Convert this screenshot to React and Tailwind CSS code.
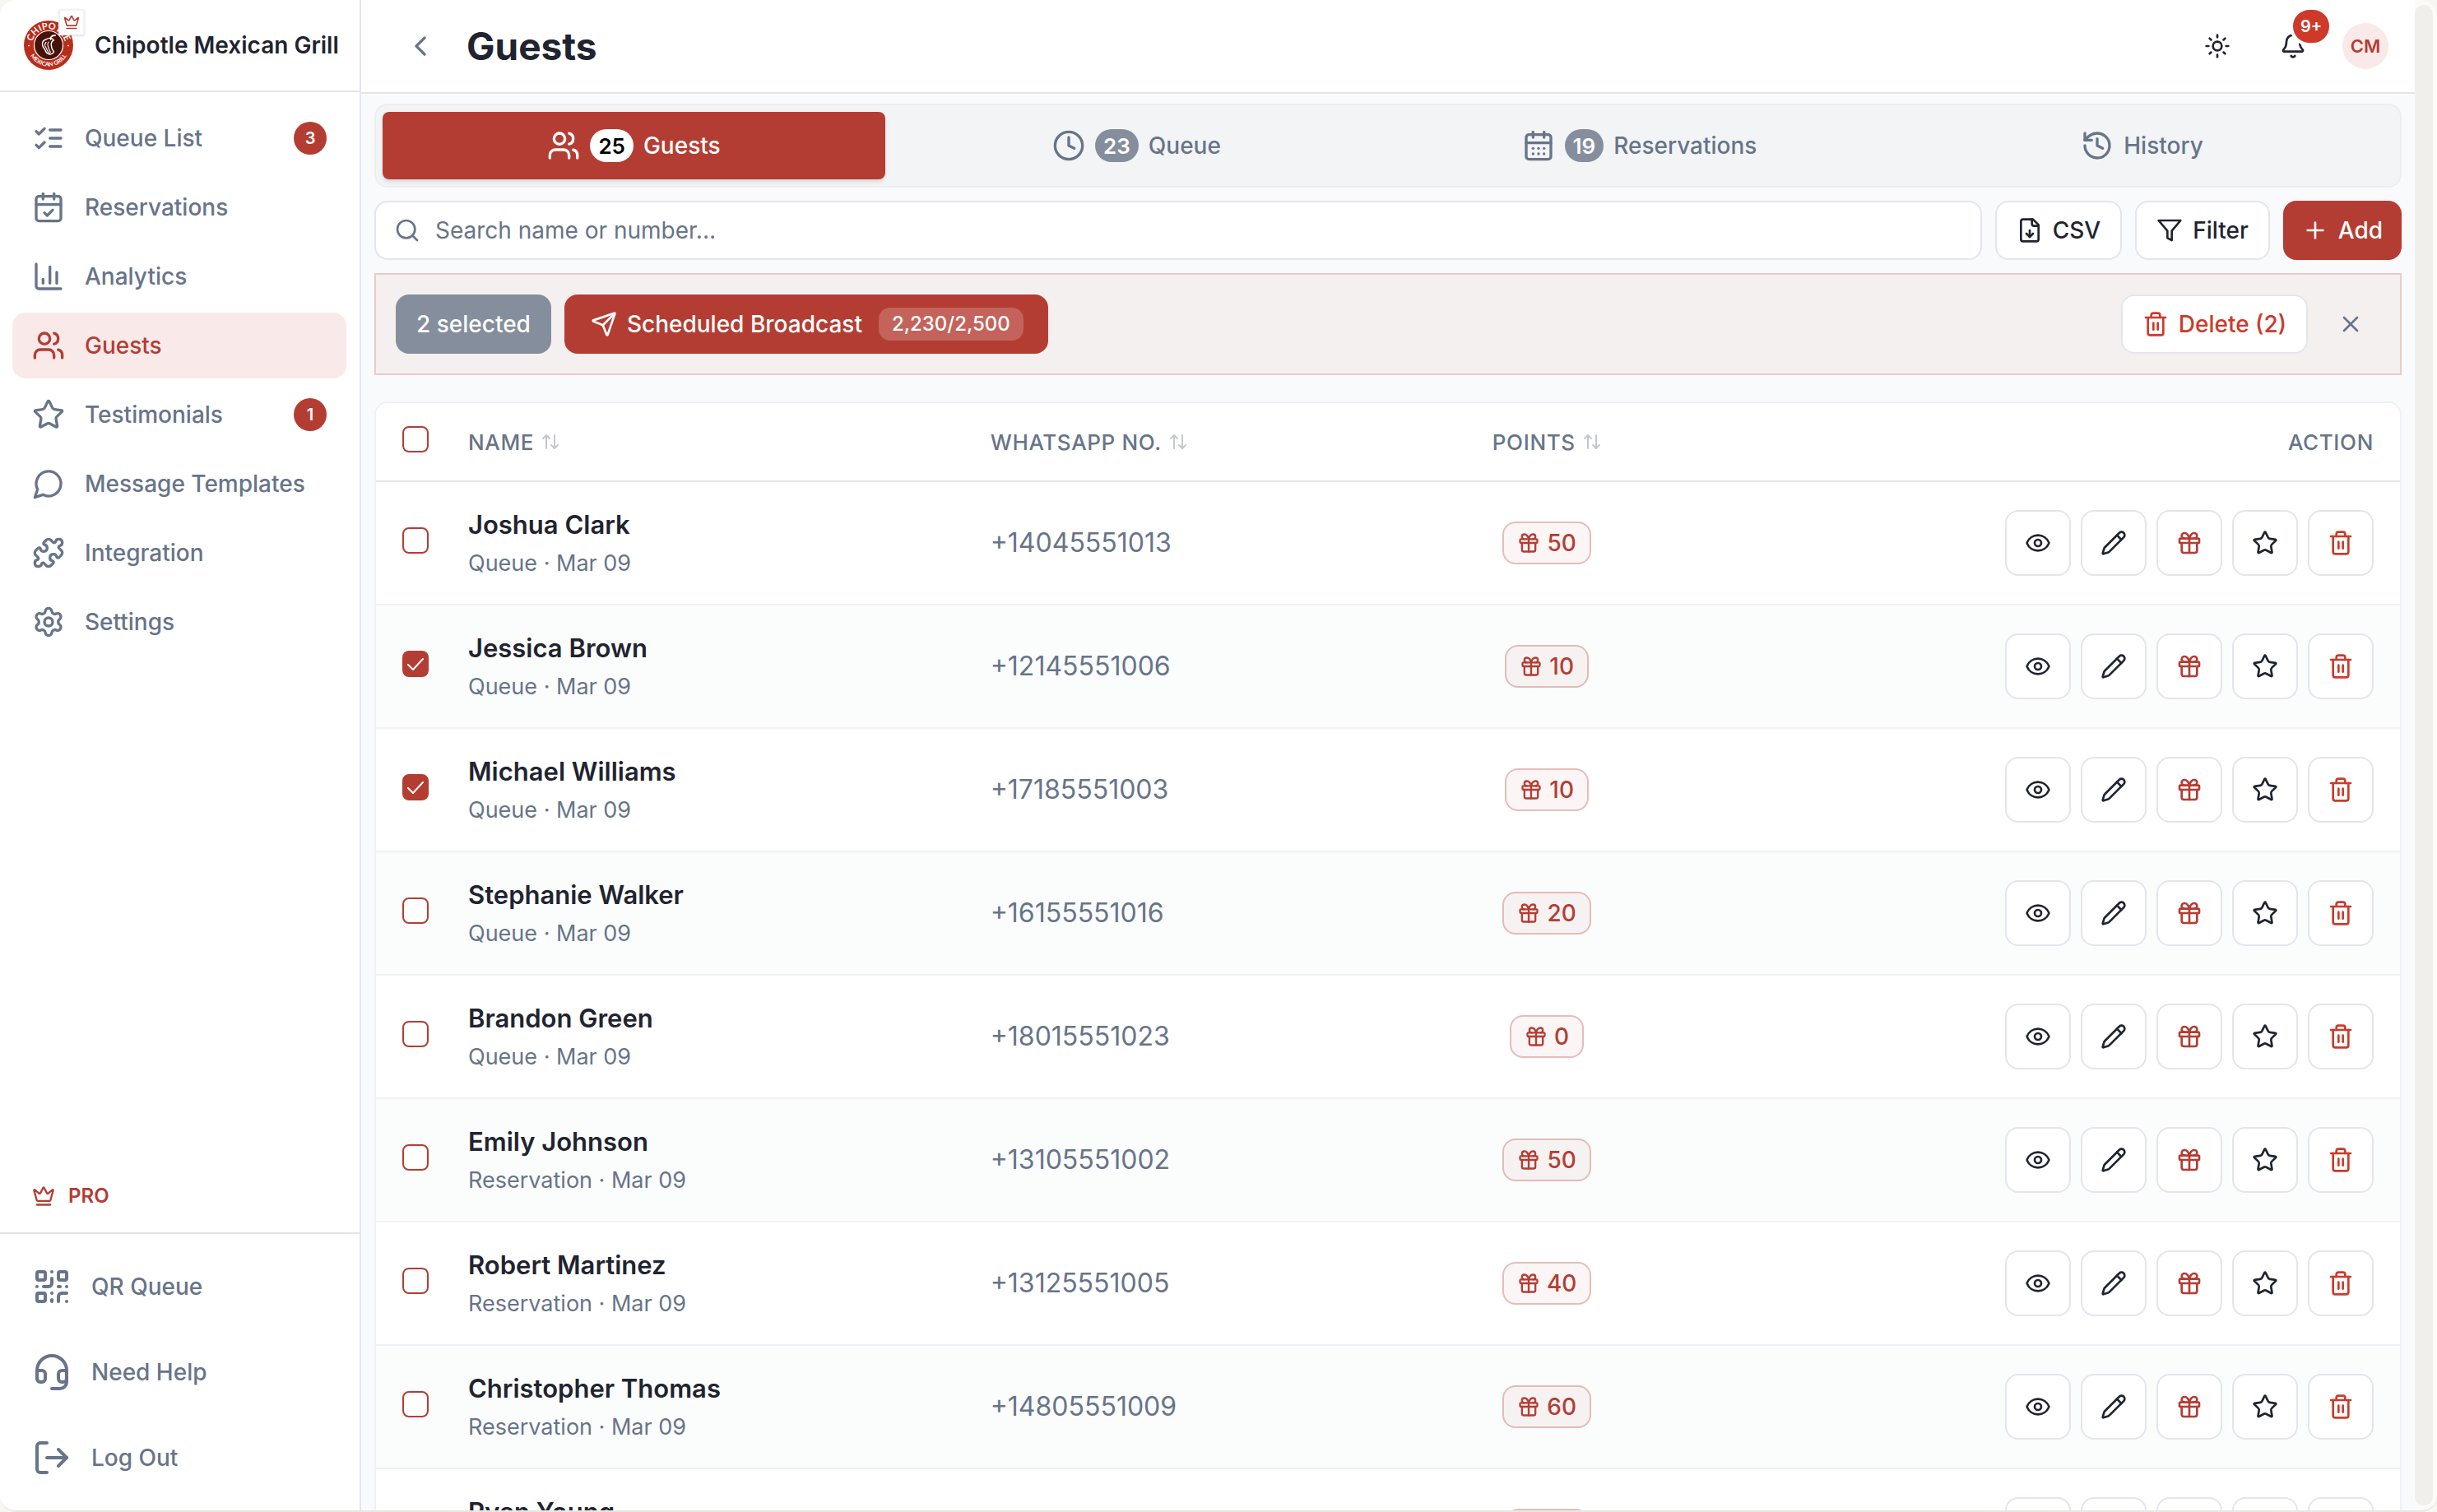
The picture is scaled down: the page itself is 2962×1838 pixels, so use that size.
import React, { useState } from "react";
import {
  ArrowUpDown,
  Bell,
  CalendarCheck,
  CalendarDays,
  ChartColumn,
  ChevronLeft,
  Clock,
  Crown,
  Eye,
  Headset,
  History,
  LogOut,
  Pencil,
  Plus,
  Puzzle,
  QrCode,
  Search,
  Send,
  Settings,
  Star,
  Sun,
  Trash2,
  Users,
  X,
} from "lucide-react";

function Icon({ className, children }) {
  return (
    <svg
      viewBox="0 0 24 24"
      fill="none"
      stroke="currentColor"
      strokeWidth="2"
      strokeLinecap="round"
      strokeLinejoin="round"
      aria-hidden="true"
      className={className}
    >
      {children}
    </svg>
  );
}

const ListChecks = ({ className }) => (
  <Icon className={className}>
    <path d="m3 17 2 2 4-4" />
    <path d="m3 7 2 2 4-4" />
    <path d="M13 6h8" />
    <path d="M13 12h8" />
    <path d="M13 18h8" />
  </Icon>
);

const MessageCircle = ({ className }) => (
  <Icon className={className}>
    <path d="M7.9 20A9 9 0 1 0 4 16.1L2 22Z" />
  </Icon>
);

const Filter = ({ className }) => (
  <Icon className={className}>
    <polygon points="22 3 2 3 10 12.46 10 19 14 21 14 12.46 22 3" />
  </Icon>
);

const FileDown = ({ className }) => (
  <Icon className={className}>
    <path d="M15 2H6a2 2 0 0 0-2 2v16a2 2 0 0 0 2 2h12a2 2 0 0 0 2-2V7Z" />
    <path d="M14 2v4a2 2 0 0 0 2 2h4" />
    <path d="M12 18v-6" />
    <path d="m9 15 3 3 3-3" />
  </Icon>
);

const Gift = ({ className }) => (
  <Icon className={className}>
    <rect x="3" y="8" width="18" height="4" rx="1" />
    <path d="M12 8v13" />
    <path d="M19 12v7a2 2 0 0 1-2 2H7a2 2 0 0 1-2-2v-7" />
    <path d="M7.5 8a2.5 2.5 0 0 1 0-5A4.8 8 0 0 1 12 8a4.8 8 0 0 1 4.5-5 2.5 2.5 0 0 1 0 5" />
  </Icon>
);

function BrandLogo() {
  return (
    <svg viewBox="0 0 60 60" className="size-[60px]" role="img" aria-label="Chipotle Mexican Grill">
      <defs>
        <path id="arc-top" d="M9.5 31a20.5 20.5 0 0 1 41 0" />
        <path id="arc-bottom" d="M4.5 30a25.5 25.5 0 0 0 51 0" />
      </defs>
      <circle cx="30" cy="30" r="30" fill="#b92d1b" />
      <circle cx="30" cy="30" r="17.5" fill="#471208" stroke="#fff" strokeWidth="1.2" />
      <g fill="#fff" fontFamily="Lato, sans-serif" fontWeight="700" textAnchor="middle">
        <text fontSize="11">
          <textPath href="#arc-top" startOffset="50%">CHIPOTLE</textPath>
        </text>
        <text fontSize="7">
          <textPath href="#arc-bottom" startOffset="50%">MEXICAN GRILL</textPath>
        </text>
      </g>
      <circle cx="6" cy="30.5" r="0.9" fill="#fff" />
      <circle cx="54" cy="30.5" r="0.9" fill="#fff" />
      <g fill="none" stroke="#fff" strokeLinecap="round" strokeLinejoin="round">
        <path d="M38 18c-4 0-6 2-5.500 5" strokeWidth="1.8" />
        <path d="M27 23c3-2.500 8-2 9.500 1-2.500 1-3.500 3-3.200 6 .4 4 1.200 6 3.200 8-3 5-9 3-10.500-2-1.500-3-4-4-3.500-8 .3-3 2-4.500 4.500-5Z" strokeWidth="1.4" />
        <path d="M27 26.500c-2 2-1.500 4.500 0 6.500 1.500 2.500 1.500 5 4 6.500M30 26c-2 2.500-1 4.500 0 7 .8 2 1 4 2.500 5.500" strokeWidth="1.1" />
      </g>
    </svg>
  );
}

const navItems = [
  { label: "Queue List", icon: ListChecks, badge: 3 },
  { label: "Reservations", icon: CalendarCheck },
  { label: "Analytics", icon: ChartColumn },
  { label: "Guests", icon: Users, active: true },
  { label: "Testimonials", icon: Star, badge: 1 },
  { label: "Message Templates", icon: MessageCircle },
  { label: "Integration", icon: Puzzle },
  { label: "Settings", icon: Settings },
];

const footerItems = [
  { label: "QR Queue", icon: QrCode },
  { label: "Need Help", icon: Headset },
  { label: "Log Out", icon: LogOut },
];

const tabs = [
  { label: "Guests", icon: Users, count: 25, active: true },
  { label: "Queue", icon: Clock, count: 23 },
  { label: "Reservations", icon: CalendarDays, count: 19 },
  { label: "History", icon: History },
];

const guests = [
  { name: "Joshua Clark", source: "Queue · Mar 09", phone: "+14045551013", points: 50 },
  { name: "Jessica Brown", source: "Queue · Mar 09", phone: "+12145551006", points: 10, checked: true },
  { name: "Michael Williams", source: "Queue · Mar 09", phone: "+17185551003", points: 10, checked: true },
  { name: "Stephanie Walker", source: "Queue · Mar 09", phone: "+16155551016", points: 20 },
  { name: "Brandon Green", source: "Queue · Mar 09", phone: "+18015551023", points: 0 },
  { name: "Emily Johnson", source: "Reservation · Mar 09", phone: "+13105551002", points: 50 },
  { name: "Robert Martinez", source: "Reservation · Mar 09", phone: "+13125551005", points: 40 },
  { name: "Christopher Thomas", source: "Reservation · Mar 09", phone: "+14805551009", points: 60 },
  { name: "Ryan Young", source: "Reservation · Mar 09", phone: "+16025551017", points: 10 },
];

const rowActions = [
  { label: "View", icon: Eye, tone: "text-[#1f2430]" },
  { label: "Edit", icon: Pencil, tone: "text-[#1f2430]" },
  { label: "Rewards", icon: Gift, tone: "text-[#b43d33]" },
  { label: "Review", icon: Star, tone: "text-[#1f2430]" },
  { label: "Delete", icon: Trash2, tone: "text-[#cd3a2a]" },
];

function Sidebar() {
  return (
    <aside className="flex w-[439px] shrink-0 flex-col border-r-2 border-[#e4e5ec] bg-white">
      <div className="flex h-28 shrink-0 items-center gap-[26px] border-b-2 border-[#e4e5ec] pl-[29px]">
        <div className="relative">
          <BrandLogo />
          <span className="absolute -top-[14px] -right-[14px] flex size-8 items-center justify-center border-2 border-[#f1f2f3] bg-white text-[#b43d33] shadow-sm">
            <Crown className="size-5" />
          </span>
        </div>
        <span className="text-[28px] leading-10 font-semibold whitespace-nowrap text-[#1f2430]">
          Chipotle Mexican Grill
        </span>
      </div>

      <nav className="flex flex-1 flex-col gap-1 p-4 pl-[15px]">
        {navItems.map(({ label, icon: NavIcon, badge, active }) => (
          <a
            key={label}
            href="#"
            aria-current={active ? "page" : undefined}
            className={
              active
                ? "flex h-20 items-center gap-6 rounded-2xl bg-[#f9eae9] px-6 text-[28px] font-medium text-[#b43d33]"
                : "flex h-20 items-center gap-6 rounded-2xl px-6 text-[28px] font-medium text-[#677489]"
            }
          >
            <NavIcon className="size-10 shrink-0" />
            <span className="flex-1">{label}</span>
            {badge && (
              <span className="flex size-10 items-center justify-center rounded-full bg-[#b43d33] text-xl font-semibold text-white">
                {badge}
              </span>
            )}
          </a>
        ))}
      </nav>

      <div className="flex items-center gap-4 pb-[26px] pl-[39px] text-2xl leading-9 font-semibold text-[#b43d33]">
        <Crown className="size-7" />
        PRO
      </div>

      <div className="flex flex-col gap-6 border-t-2 border-[#e4e5ec] py-6 pr-4 pl-[15px]">
        {footerItems.map(({ label, icon: FootIcon }) => (
          <a key={label} href="#" className="flex h-20 items-center gap-6 px-6 text-[28px] font-medium text-[#677489]">
            <FootIcon className="size-12 shrink-0" />
            {label}
          </a>
        ))}
      </div>
    </aside>
  );
}

function Header() {
  return (
    <header className="flex h-[114px] shrink-0 items-center border-b-2 border-[#e4e5ec] bg-white pr-8 pl-8">
      <button type="button" aria-label="Back" className="flex size-20 items-center justify-center text-[#677489]">
        <ChevronLeft className="size-10" />
      </button>
      <h1 className="ml-4 text-[46px] font-bold text-[#1f2430]">Guests</h1>
      <div className="ml-auto flex items-center gap-6 text-[#1f2430]">
        <button type="button" aria-label="Toggle theme" className="flex size-16 items-center justify-center">
          <Sun className="size-8" />
        </button>
        <button type="button" aria-label="Notifications" className="relative flex h-16 w-[72px] items-center justify-center">
          <Bell className="size-8" />
          <span className="absolute -top-4 left-8 flex h-12 w-[52px] items-center justify-center rounded-full border-4 border-white bg-[#cd3a2a] text-xl font-semibold text-white">
            9+
          </span>
        </button>
        <button
          type="button"
          aria-label="Account"
          className="flex size-14 items-center justify-center rounded-full bg-[#f9eae9] text-[22px] font-semibold text-[#b43d33]"
        >
          CM
        </button>
      </div>
    </header>
  );
}

function Tabs() {
  return (
    <div role="tablist" className="grid grid-cols-4 rounded-2xl border-2 border-[#eceef0] bg-[#f3f4f6] p-2">
      {tabs.map(({ label, icon: TabIcon, count, active }) => (
        <button
          key={label}
          type="button"
          role="tab"
          aria-selected={Boolean(active)}
          className={
            active
              ? "flex h-[82px] items-center justify-center gap-3 rounded-lg bg-[#b43d33] text-[28px] font-medium text-white shadow-md"
              : "flex h-[82px] items-center justify-center gap-3 rounded-lg text-[28px] font-medium text-[#677489]"
          }
        >
          <TabIcon className="size-10" />
          {count && (
            <span
              className={
                active
                  ? "flex h-10 items-center rounded-full bg-white px-[10px] text-[26px] font-semibold text-black"
                  : "flex h-10 items-center rounded-full bg-[#858e9c] px-[10px] text-[26px] font-semibold text-white"
              }
            >
              {count}
            </span>
          )}
          {label}
        </button>
      ))}
    </div>
  );
}

function Toolbar() {
  const outline =
    "flex h-[72px] items-center gap-3 rounded-2xl border-2 border-[#e4e5ec] bg-white px-6 text-[28px] font-medium text-[#1f2430]";
  return (
    <div className="flex gap-4">
      <label className="flex h-[72px] flex-1 items-center gap-[18px] rounded-2xl border-2 border-[#e4e5ec] bg-white px-[22px]">
        <Search className="size-8 shrink-0 text-[#677489]" />
        <input
          type="text"
          aria-label="Search guests"
          placeholder="Search name or number..."
          className="w-full bg-transparent text-[28px] text-[#1f2430] outline-none placeholder:text-[#677489]"
        />
      </label>
      <button type="button" className={outline}>
        <FileDown className="size-8" />
        CSV
      </button>
      <button type="button" className={outline}>
        <Filter className="size-8" />
        Filter
      </button>
      <button
        type="button"
        className="flex h-[72px] items-center gap-3 rounded-2xl bg-[#b43d33] px-[23px] text-[28px] font-medium text-white"
      >
        <Plus className="size-8" />
        Add
      </button>
    </div>
  );
}

function SelectionBar() {
  return (
    <div className="flex items-center gap-4 border-2 border-[#e9cbc7] bg-[#f5f0f0] p-6">
      <span className="flex h-[72px] items-center rounded-2xl bg-[#858e9c] px-[25px] text-[28px] font-medium text-white">
        2 selected
      </span>
      <button
        type="button"
        className="flex h-[72px] items-center gap-3 rounded-2xl bg-[#b43d33] pr-[30px] pl-8 text-[28px] font-medium text-white"
      >
        <Send className="size-8" />
        Scheduled Broadcast
        <span className="ml-2 flex h-10 items-center rounded-[14px] bg-white/20 px-4 text-2xl">2,230/2,500</span>
      </button>
      <button
        type="button"
        className="ml-auto flex h-[72px] items-center gap-3 rounded-2xl border-2 border-[#e4e5ec] bg-white px-6 text-[28px] font-medium text-[#cd3a2a]"
      >
        <Trash2 className="size-8" />
        Delete (2)
      </button>
      <button type="button" aria-label="Clear selection" className="flex size-[72px] items-center justify-center text-[#677489]">
        <X className="size-8" />
      </button>
    </div>
  );
}

function Checkbox({ label, defaultChecked = false }) {
  const [checked, setChecked] = useState(defaultChecked);
  return (
    <span className="relative mb-[6px] flex size-8">
      <input
        type="checkbox"
        aria-label={label}
        checked={checked}
        onChange={(event) => setChecked(event.target.checked)}
        className="size-8 appearance-none rounded-lg border-2 border-[#b43d33] bg-white checked:bg-[#b43d33]"
      />
      {checked && (
        <Icon className="pointer-events-none absolute inset-1 size-6 text-white">
          <path d="M21 6 9 19l-6-6" />
        </Icon>
      )}
    </span>
  );
}

function SortHeader({ children }) {
  return (
    <button type="button" className="flex items-center gap-2 font-medium tracking-wide uppercase">
      {children}
      <ArrowUpDown className="size-6 text-[#c3c8d0]" />
    </button>
  );
}

function GuestTable() {
  return (
    <div className="overflow-hidden rounded-t-2xl border-2 border-b-0 border-[#f0f1f4] bg-white">
      <table className="w-full table-fixed border-separate border-spacing-0 text-left">
        <colgroup>
          <col className="w-[80px]" />
          <col className="w-[25.8%]" />
          <col className="w-[24.8%]" />
          <col className="w-[8%]" />
          <col />
        </colgroup>
        <thead>
          <tr className="text-[26px] text-[#677489] [&>th]:h-24 [&>th]:border-b-2 [&>th]:border-[#e4e5ec] [&>th]:font-medium">
            <th className="pl-8">
              <Checkbox label="Select all guests" />
            </th>
            <th className="px-8">
              <SortHeader>Name</SortHeader>
            </th>
            <th className="px-8">
              <SortHeader>WhatsApp No.</SortHeader>
            </th>
            <th className="px-8">
              <SortHeader>Points</SortHeader>
            </th>
            <th className="px-8 text-right tracking-wide uppercase">Action</th>
          </tr>
        </thead>
        <tbody>
          {guests.map((guest) => (
            <tr
              key={guest.name}
              className="even:bg-[#fbfcfc] [&>td]:h-[150px] [&>td]:border-b-2 [&>td]:border-[#f0f1f4]"
            >
              <td className="pl-8">
                <Checkbox label={`Select ${guest.name}`} defaultChecked={guest.checked} />
              </td>
              <td className="px-8">
                <div className="text-[31px] leading-[48px] font-semibold text-[#1f2430]">{guest.name}</div>
                <div className="mt-0.5 text-[27px] leading-[42px] text-[#677489]">{guest.source}</div>
              </td>
              <td className="px-8 text-[32px] text-[#677489]">{guest.phone}</td>
              <td>
                <div className="flex justify-center">
                  <span className="flex h-[52px] items-center gap-2 rounded-2xl border-2 border-[#b43d33]/30 bg-[#b43d33]/5 px-4 text-[28px] font-medium text-[#b43d33]">
                    <Gift className="size-7" />
                    {guest.points}
                  </span>
                </div>
              </td>
              <td className="px-8">
                <div className="flex justify-end gap-3">
                  {rowActions.map(({ label, icon: ActionIcon, tone }) => (
                    <button
                      key={label}
                      type="button"
                      aria-label={`${label} ${guest.name}`}
                      className={`flex size-20 items-center justify-center rounded-2xl border-2 border-[#e4e5ec] bg-white ${tone}`}
                    >
                      <ActionIcon className="size-8" />
                    </button>
                  ))}
                </div>
              </td>
            </tr>
          ))}
        </tbody>
      </table>
    </div>
  );
}

export default function App() {
  return (
    <div className="h-screen bg-[#f7f6f0] font-[Inter,sans-serif]">
      <div className="flex h-full overflow-hidden rounded-[20px] border-b-2 border-[#e8e7e0] bg-[#fdfbf7]">
        <Sidebar />
        <main className="flex min-w-0 flex-1 flex-col overflow-hidden bg-[#f9fafc]">
          <Header />
          <div className="flex flex-col gap-4 px-4 pt-3">
            <Tabs />
            <Toolbar />
            <SelectionBar />
            <div className="mt-4">
              <GuestTable />
            </div>
          </div>
        </main>
        <div className="w-[27px] shrink-0 pt-[6px] pr-[5px] pb-[6px]">
          <div className="h-full rounded-full bg-[#f0efeb]" />
        </div>
      </div>
    </div>
  );
}
